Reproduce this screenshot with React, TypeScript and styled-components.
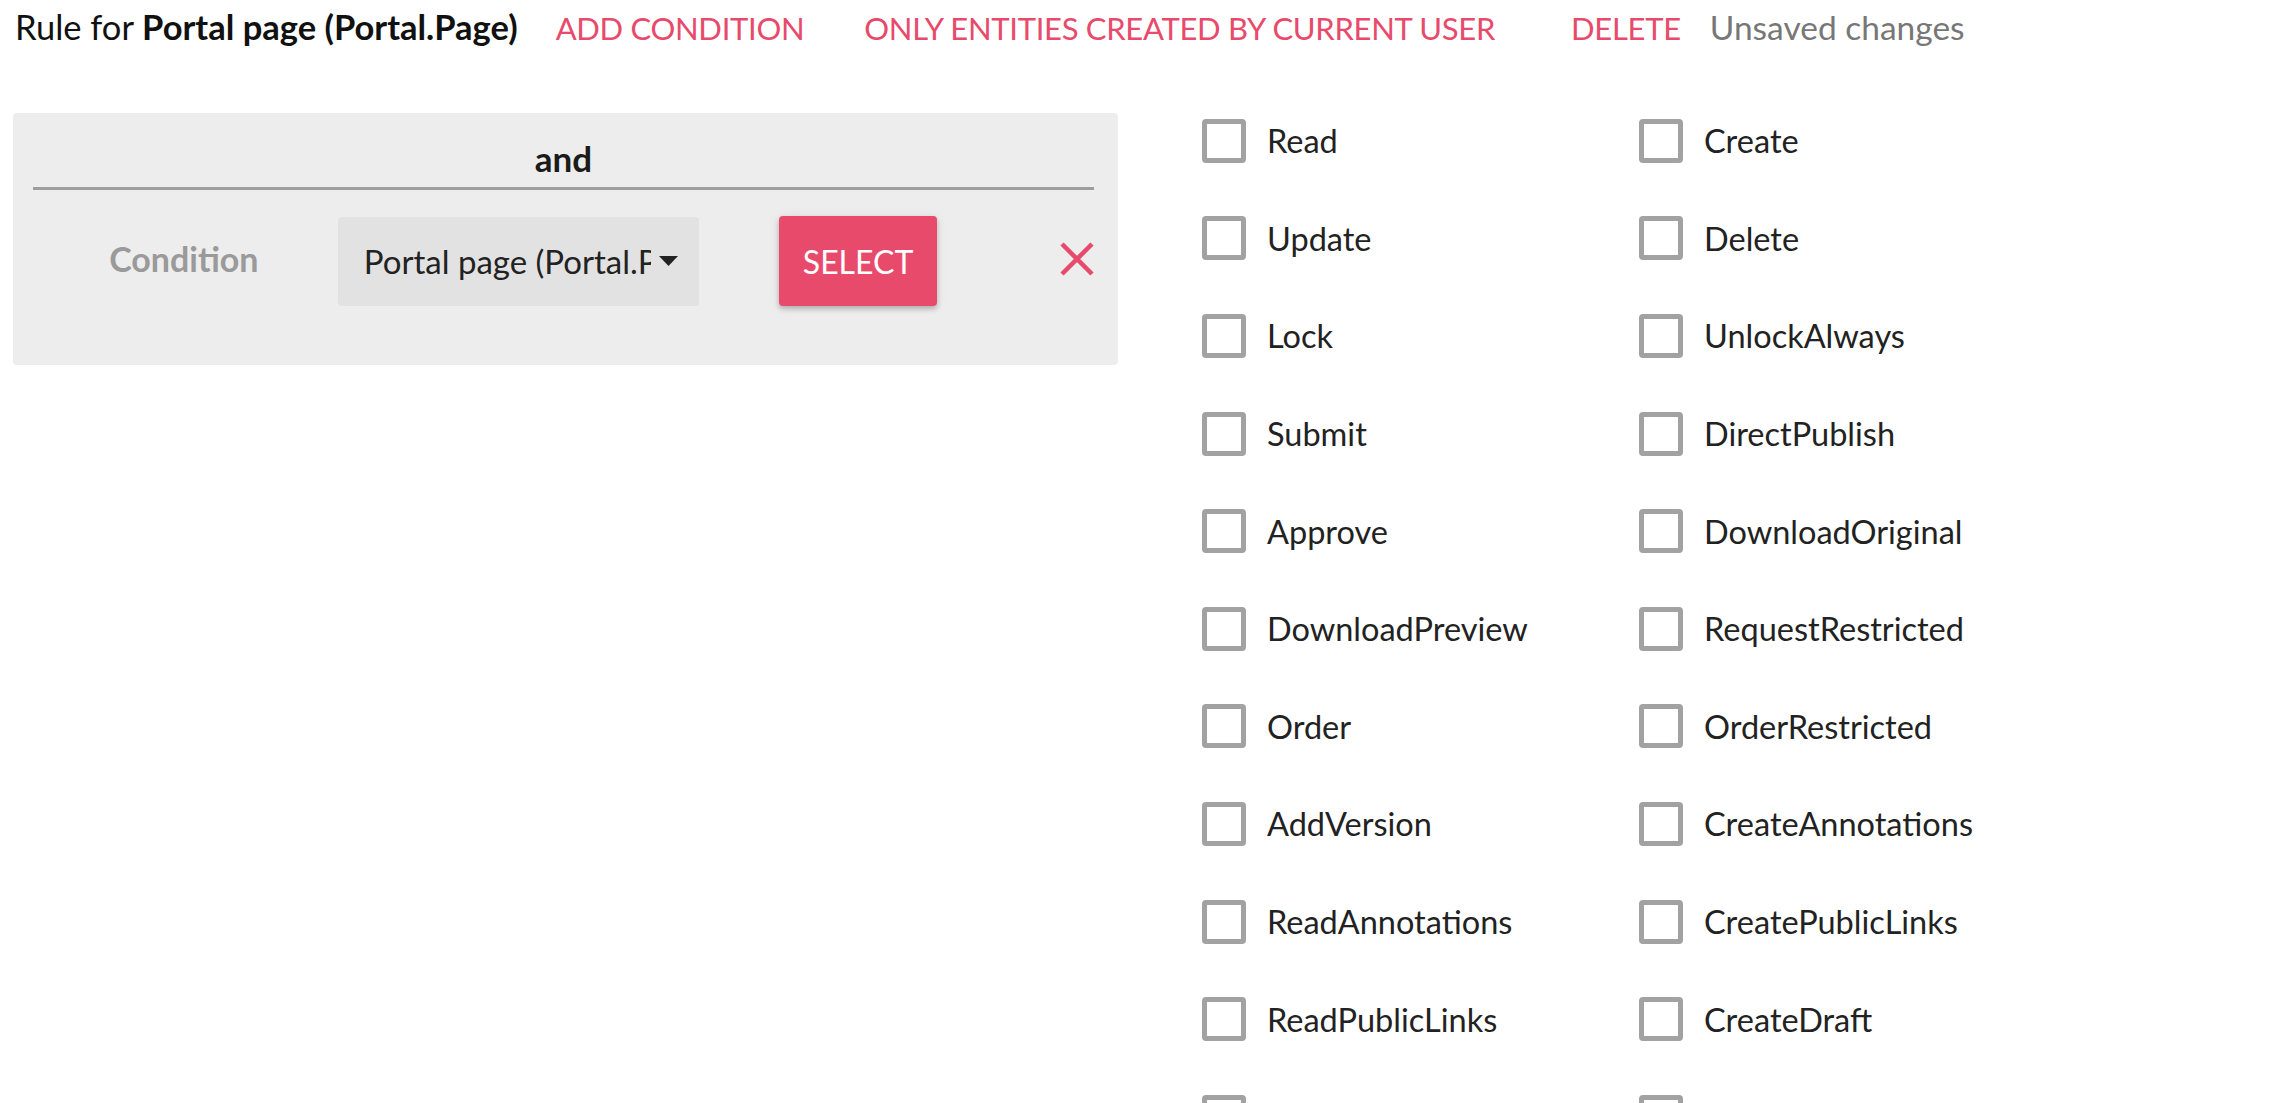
import React from 'react';
import styled, { createGlobalStyle } from 'styled-components';

const GlobalStyle = createGlobalStyle`
  html, body {
    margin: 0;
    padding: 0;
    background: #ffffff;
  }
  body {
    font-family: Lato, "Open Sans", sans-serif;
    color: #1f1f1f;
  }
`;

const pink = '#e84a6b';

const Page = styled.div`
  width: 2270px;
  height: 1103px;
  overflow: hidden;
`;

const Header = styled.header`
  height: 92px;
  box-sizing: border-box;
  padding: 7px 0 0 15px;
  display: flex;
  align-items: baseline;
  font-size: 34.5px;
  line-height: 40px;
  white-space: nowrap;
`;

const Title = styled.div`
  color: #111;
  margin-right: 20px;

  b {
    font-weight: 700;
  }
`;

const TextButton = styled.button<{ gap?: number }>`
  font-family: inherit;
  font-size: 31px;
  letter-spacing: -0.3px;
  line-height: 40px;
  color: ${pink};
  background: none;
  border: none;
  padding: 0 18px;
  margin: 0 0 0 ${(p) => p.gap ?? 0}px;
  text-transform: uppercase;
  cursor: pointer;
`;

const Status = styled.span`
  color: #777;
  font-size: 33.5px;
  margin-left: 11px;
`;

const Body = styled.main`
  display: flex;
  align-items: flex-start;
`;

const ConditionPanel = styled.section`
  margin: 21px 0 0 13px;
  width: 1105px;
  height: 252px;
  box-sizing: border-box;
  padding: 0 24px 0 20px;
  background: #ededed;
  border-radius: 4px;
`;

const PanelHeader = styled.div`
  padding: 27px 0 10px;
  text-align: center;
  font-size: 35px;
  line-height: 37px;
  font-weight: 700;
  color: #1b1b1b;
  border-bottom: 3px solid #9e9e9e;
`;

const ConditionRow = styled.div`
  margin-top: 26px;
  height: 90px;
  display: flex;
  align-items: center;
`;

const ConditionLabel = styled.div`
  width: 306px;
  margin: 0 3px 6px 0;
  text-align: center;
  font-size: 34px;
  font-weight: 700;
  color: #9a9a9a;
`;

const SelectBox = styled.div`
  width: 366px;
  height: 89px;
  box-sizing: border-box;
  padding: 0 0 0 26px;
  background: #e2e2e2;
  border-radius: 4px;
  display: flex;
  align-items: center;
  font-size: 33px;
  color: #222;
`;

const SelectText = styled.span`
  width: 287px;
  overflow: hidden;
  white-space: nowrap;
`;

const Arrow = styled.svg`
  margin-left: 8px;
  width: 19px;
  height: 10px;
  fill: #222;
`;

const PrimaryButton = styled.button`
  margin-left: 80px;
  width: 160px;
  height: 90px;
  border: none;
  border-radius: 4px;
  background: ${pink};
  color: #fff;
  font-family: inherit;
  font-size: 32px;
  text-transform: uppercase;
  box-shadow: 0 3px 5px rgba(0, 0, 0, 0.22), 0 1px 12px rgba(0, 0, 0, 0.08);
  cursor: pointer;
`;

const RemoveButton = styled.button`
  margin: 0 0 5px 123px;
  width: 34px;
  height: 34px;
  padding: 0;
  border: none;
  background: none;
  display: flex;
  cursor: pointer;

  svg {
    width: 34px;
    height: 34px;
    stroke: ${pink};
    stroke-width: 4.5;
  }
`;

const PermissionGrid = styled.div`
  margin-left: 84px;
  display: grid;
  grid-template-columns: 437px 437px;
  grid-auto-rows: 97.6px;
`;

const Permission = styled.label`
  display: flex;
  align-items: center;
  font-size: 32.5px;
  color: #222;
  white-space: nowrap;
`;

const Box = styled.span`
  width: 44px;
  height: 44px;
  box-sizing: border-box;
  border: 5px solid #a2a2a2;
  border-radius: 4px;
  background: #fff;
  flex-shrink: 0;
`;

const PermissionName = styled.span`
  margin-left: 21px;
`;

const permissions = [
  'Read',
  'Create',
  'Update',
  'Delete',
  'Lock',
  'UnlockAlways',
  'Submit',
  'DirectPublish',
  'Approve',
  'DownloadOriginal',
  'DownloadPreview',
  'RequestRestricted',
  'Order',
  'OrderRestricted',
  'AddVersion',
  'CreateAnnotations',
  'ReadAnnotations',
  'CreatePublicLinks',
  'ReadPublicLinks',
  'CreateDraft',
  'Publish',
  'Archive',
];

export default function App() {
  return (
    <Page>
      <GlobalStyle />
      <Header>
        <Title>
          Rule for <b>Portal page (Portal.Page)</b>
        </Title>
        <TextButton>Add condition</TextButton>
        <TextButton gap={24}>Only entities created by current user</TextButton>
        <TextButton gap={40}>Delete</TextButton>
        <Status>Unsaved changes</Status>
      </Header>

      <Body>
        <ConditionPanel>
          <PanelHeader>and</PanelHeader>
          <ConditionRow>
            <ConditionLabel>Condition</ConditionLabel>
            <SelectBox>
              <SelectText>Portal page (Portal.Page)</SelectText>
              <Arrow viewBox="0 0 19 10">
                <path d="M0 0h19L9.5 10z" />
              </Arrow>
            </SelectBox>
            <PrimaryButton>Select</PrimaryButton>
            <RemoveButton aria-label="remove">
              <svg viewBox="0 0 34 34" fill="none">
                <path d="M2 2l30 30M32 2L2 32" />
              </svg>
            </RemoveButton>
          </ConditionRow>
        </ConditionPanel>

        <PermissionGrid>
          {permissions.map((name) => (
            <Permission key={name}>
              <Box />
              <PermissionName>{name}</PermissionName>
            </Permission>
          ))}
        </PermissionGrid>
      </Body>
    </Page>
  );
}
